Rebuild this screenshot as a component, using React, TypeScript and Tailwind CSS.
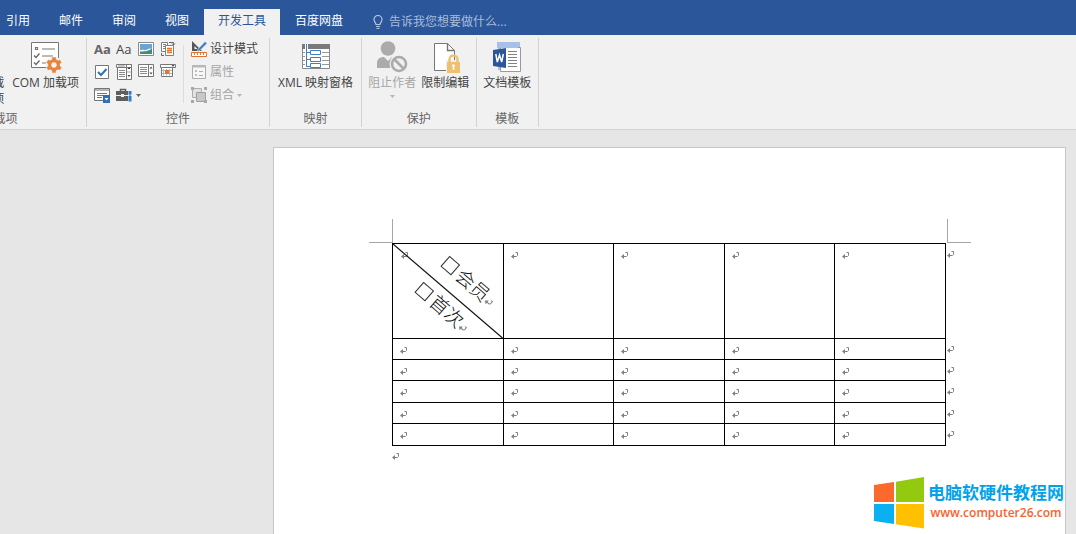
import React from "react";

const tabs = ["引用", "邮件", "审阅", "视图", "开发工具", "百度网盘"];

const bodyRows = [
  { id: 1, height: "h-[21px]" },
  { id: 2, height: "h-[21px]" },
  { id: 3, height: "h-[22px]" },
  { id: 4, height: "h-[21px]" },
  { id: 5, height: "h-[22px]" }
];

const Svg: React.FC<{ size?: number; children: React.ReactNode }> = ({ size = 16, children }) => (
  <svg width={size} height={size} viewBox={`0 0 ${size} ${size}`} fill="none" aria-hidden="true" className="block shrink-0">
    {children}
  </svg>
);

/* Large ribbon icons, 32px */

const ComAddinsIcon = () => (
  <Svg size={32}>
    <path d="M1.500 1.500h27v25h-27z" fill="#fff" stroke="#767676" />
    <path d="M5.500 6.500h2v2h-2zM12 8h13M12 15h11M12 22h5" stroke="#767676" strokeWidth="1.200" />
    <path d="M4 14.500l2 2 3.500-4M4 21.500l2 2 3.500-4" stroke="#666" strokeWidth="1.300" />
    <circle cx="24" cy="24" r="8.500" fill="#f1f1f1" />
    <circle cx="24" cy="24" r="4.300" stroke="#e8833a" strokeWidth="3.200" />
    <path d="M24 16.300v3M24 28.700v3M17.300 20.200l2.600 1.500M28.100 26.300l2.600 1.500M17.300 27.800l2.600-1.500M28.100 21.700l2.600-1.500" stroke="#e8833a" strokeWidth="3.600" />
  </Svg>
);

const XmlMappingIcon = () => (
  <Svg size={32}>
    <path d="M2.500 3.500h27v24h-27z" fill="#fff" stroke="#8a8a8a" />
    <path d="M2 3h28v5H2z" fill="#7a7a7a" />
    <path d="M22 11.500h7M22 15.500h7M22 19.500h7M22 23.500h7M3 11.500h3M3 15.500h3M3 19.500h3M3 23.500h3" stroke="#999" />
    <path d="M6.500 3v22.500h4M6.500 11.500h4M6.500 18.500h4" stroke="#fff" strokeWidth="3" />
    <path d="M6.500 3v22.500h4M6.500 11.500h4M6.500 18.500h4" stroke="#3e7fc1" />
    <path d="M10.500 9.500h10v4h-10zM10.500 16.500h10v4h-10zM10.500 22.500h10v4h-10z" fill="#fff" stroke="#3e7fc1" />
  </Svg>
);

const BlockAuthorsIcon = () => (
  <Svg size={32}>
    <circle cx="12" cy="7.500" r="7.300" fill="#ababab" />
    <path d="M1 27v-5c0-4 3-6 7-6l4 4 4-4c4 0 7 2 7 6v5z" fill="#ababab" />
    <circle cx="23" cy="23" r="9.500" fill="#f1f1f1" />
    <circle cx="23" cy="23" r="7" stroke="#ababab" strokeWidth="2.600" />
    <path d="M18 18l10 10" stroke="#ababab" strokeWidth="2.600" />
  </Svg>
);

const RestrictEditingIcon = () => (
  <Svg size={32}>
    <path d="M5.500 2.500h13l7 7v20h-20z" fill="#fff" stroke="#767676" />
    <path d="M18.500 2.500v7h7" stroke="#767676" strokeWidth="1.400" />
    <path d="M17 19h15v14H17z" fill="#f1f1f1" />
    <path d="M20.500 22v-3.500a4 4 0 0 1 8 0V22" stroke="#edc170" strokeWidth="2.400" />
    <path d="M18 21h13v11H18z" fill="#edc170" />
    <path d="M24.500 24v5" stroke="#fff" strokeWidth="1.600" />
    <circle cx="24.500" cy="24.500" r="1.300" fill="#fff" />
  </Svg>
);

const DocumentTemplateIcon = () => (
  <Svg size={32}>
    <path d="M7 1h22v28H7z" fill="#a6c0e8" />
    <path d="M9.500 6.500h20v24h-20z" fill="#fff" stroke="#8f9bab" />
    <path d="M6 1h21v6H6z" fill="#a6c0e8" />
    <path d="M17 10.500h9M17 13.500h9M17 16.500h9M17 19.500h9M17 22.500h9M17 25.500h9" stroke="#808080" />
    <path d="M2 9l13-2v20L2 25z" fill="#2b579a" />
    <path d="M4.800 13l1.500 8 2.200-7 2.200 7 1.600-8" stroke="#fff" strokeWidth="1.500" />
  </Svg>
);

/* Small ribbon icons, 16px */

const PictureIcon = () => (
  <Svg>
    <path d="M.5 1.500h15v13H.5z" fill="#fff" stroke="#8a8a8a" />
    <path d="M2 3h12v5c-3-2-5 2-8 1-2-.6-3 0-4 .6z" fill="#6ba3d6" />
    <path d="M2 13v-2.500c3 0 8 0 12-3V13z" fill="#3f8e7c" />
  </Svg>
);

const BuildingBlockIcon = () => (
  <Svg>
    <path d="M1.500 1.500h6v9h-6z" fill="#fff" stroke="#808080" />
    <path d="M3 3.500h3M3 5.500h3M3 7.500h3" stroke="#808080" />
    <path d="M5.500 4.500h8v10h-8z" fill="#fff" stroke="#808080" />
    <path d="M7 7.500h5M7 9.500h5M7 11.500h5" stroke="#e0752e" strokeWidth="1.400" />
    <path d="M9 1.500h4.500V4M12 2.500L13.500 4 15 2.500M1.500 12v2.500H4" stroke="#666" />
  </Svg>
);

const CheckBoxIcon = () => (
  <Svg>
    <path d="M1.500 1.500h13v13h-13z" fill="#fff" stroke="#767676" />
    <path d="M4 8l3 3 5.500-6" stroke="#2f6fb7" strokeWidth="2" />
  </Svg>
);

const ComboBoxIcon = () => (
  <Svg>
    <path d="M.5 .5h15v3H.5zM1.500 3.500h9v12h-9zM10.500 .5h5v15h-5z" fill="#fff" stroke="#767676" />
    <path d="M3 6.500h6M3 8.500h6M3 10.500h6M3 12.500h6M2 2h7" stroke="#8a8a8a" />
    <path d="M11.500 5L13 3l1.500 2zM11.500 11l1.500 2 1.500-2z" fill="#444" />
    <path d="M11 8h4" stroke="#aaa" />
  </Svg>
);

const DropDownListIcon = () => (
  <Svg>
    <path d="M.5 .5h15v12H.5zM10.500 .5v12" fill="#fff" stroke="#767676" />
    <path d="M2 3.500h7M2 5.500h7M2 7.500h7M2 9.500h7" stroke="#8a8a8a" />
    <path d="M11.500 4.500L13 2.500l1.500 2zM11.500 8.500l1.500 2 1.500-2z" fill="#444" />
  </Svg>
);

const DatePickerIcon = () => (
  <Svg>
    <path d="M1.500 3.500h11v9h-11z" fill="#fff" stroke="#767676" />
    <path d="M3.500 5v6.500M6.500 5v6.500M9.500 5v6.500M2 6.500h10M2 9.500h10" stroke="#b5b5b5" />
    <path d="M.5 .5h15v3H.5z" fill="#fff" stroke="#767676" />
    <path d="M5 6h4v4H5z" fill="#e0752e" />
    <path d="M11.500 1h3L13 3z" fill="#555" />
  </Svg>
);

const RepeatingSectionIcon = () => (
  <Svg>
    <path d="M.5 1.500h15v12H.5z" fill="#fff" stroke="#767676" />
    <path d="M1 2h14v2H1z" fill="#b5b5b5" />
    <path d="M3 6.500h10M3 8.500h6M3 10.500h5" stroke="#767676" />
    <path d="M9 8h7v8H9z" fill="#2f6fb7" />
    <path d="M10.500 11l2 2.500 2-2.500z" fill="#fff" />
  </Svg>
);

const LegacyToolsIcon = () => (
  <Svg>
    <path d="M4.500 4V2.500h5V4" stroke="#5e5e5e" strokeWidth="1.500" />
    <path d="M0 4h12v4H0zM0 9h12v5H0z" fill="#5e5e5e" />
    <path d="M5 7h3v3H5z" fill="#f1f1f1" />
    <path d="M12.500 4h3v3.500h-1V9h1v5.500h-3V9h1V7.500h-1z" fill="#2f7fc8" />
  </Svg>
);

const DesignModeIcon = () => (
  <Svg>
    <path d="M1 0v10h10z" fill="#555" />
    <path d="M3.500 5v3h3z" fill="#f1f1f1" />
    <path d="M7 8l7-7.500 2 2-7 7-3 1z" fill="#3e7fc1" stroke="#f1f1f1" strokeWidth=".5" />
    <path d="M.5 11.500h15v4H.5z" fill="#fff" stroke="#e0752e" />
    <path d="M3.500 12v2M6.500 12v2M9.500 12v2M12.500 12v2" stroke="#e0752e" />
  </Svg>
);

const PropertiesIcon = () => (
  <Svg>
    <path d="M1.500 1.500h13v13h-13z" fill="#f7f7f7" stroke="#adadad" />
    <path d="M1 1h14v2.500H1z" fill="#b8b8b8" />
    <path d="M4.500 6.500h1v1h-1zM4.500 10.500h1v1h-1z" stroke="#adadad" />
    <path d="M8 7.500h4M8 11.500h4" stroke="#adadad" />
  </Svg>
);

const GroupIcon = () => (
  <Svg>
    <path d="M1.500 1.500h9v9h-9z" fill="#e2e2e2" stroke="#adadad" />
    <path d="M5.500 5.500h9v9h-9z" fill="#c8c8c8" stroke="#a0a0a0" />
    <path d="M0 0h3v3H0zM13 0h3v3h-3zM0 13h3v3H0zM13 13h3v3h-3z" fill="#a8a8a8" />
  </Svg>
);

const Caret: React.FC<{ className: string }> = ({ className }) => (
  <svg width="5" height="3" viewBox="0 0 5 3" aria-hidden="true" className={`block shrink-0 ${className}`}>
    <path d="M0 0h5L2.500 3z" fill="currentColor" />
  </svg>
);

const ReturnMark: React.FC<{ className?: string }> = ({ className = "" }) => (
  <svg width="8" height="8" viewBox="0 0 8 8" fill="none" aria-hidden="true" className={`block shrink-0 text-[#808080] ${className}`}>
    <path d="M4.500 .5h2v3l-1 1H1" stroke="currentColor" />
    <path d="M0 4.500L3 2v5z" fill="currentColor" />
  </svg>
);

const RibbonGroup: React.FC<{ title: string; className?: string; children: React.ReactNode }> = ({ title, className = "", children }) => (
  <section aria-label={title} className={`flex h-[89px] shrink-0 flex-col border-r border-[#d2d2d2] pt-[3px] ${className}`}>
    <div className="flex flex-1 items-start justify-center">{children}</div>
    <div className="text-center leading-4 text-[#666]">{title}</div>
  </section>
);

const LargeButton: React.FC<{ label: string; icon: React.ReactNode; disabled?: boolean; menu?: boolean }> = ({ label, icon, disabled, menu }) => (
  <button disabled={disabled} className="flex shrink-0 flex-col items-center whitespace-nowrap leading-4 text-[#444] disabled:text-[#a6a6a6]">
    {icon}
    <span className="mt-0.5">{label}</span>
    {menu && <Caret className="mt-1 text-[#b5b5b5]" />}
  </button>
);

const controls = [
  { name: "格式文本内容控件", icon: <span className="font-bold text-[#666]">Aa</span> },
  { name: "纯文本内容控件", icon: <span className="text-[#444]">Aa</span> },
  { name: "图片内容控件", icon: <PictureIcon /> },
  { name: "构建基块库内容控件", icon: <BuildingBlockIcon /> },
  { name: "复选框内容控件", icon: <CheckBoxIcon /> },
  { name: "组合框内容控件", icon: <ComboBoxIcon /> },
  { name: "下拉列表内容控件", icon: <DropDownListIcon /> },
  { name: "日期选取器内容控件", icon: <DatePickerIcon /> },
  { name: "重复分区内容控件", icon: <RepeatingSectionIcon /> },
  { name: "旧式工具", icon: <><LegacyToolsIcon /><Caret className="ml-1 text-[#666]" /></> }
];

const Ribbon = () => (
  <div className="flex overflow-hidden border-b border-[#d2d2d2] bg-[#f1f1f1] pt-[3px] pb-0.5">
    <RibbonGroup title="加载项" className="-ml-[84px] w-[171px] pr-[3px]">
      <div className="flex w-full items-start justify-end gap-2 pr-1">
        <button className="mt-[34px] text-right leading-4 text-[#444]">加载<br />项</button>
        <LargeButton label="COM 加载项" icon={<ComAddinsIcon />} />
      </div>
    </RibbonGroup>

    <RibbonGroup title="控件">
      <div className="grid grid-cols-[repeat(4,16px)] gap-x-1.5 gap-y-[7px] pr-[7px] pl-[7px]">
        {controls.map((control) => (
          <button key={control.name} aria-label={control.name} className="flex h-4 items-center text-[13px] leading-4">
            {control.icon}
          </button>
        ))}
      </div>
      <div className="mt-1 h-[58px] border-l border-[#dcdcdc]" />
      <div className="flex flex-col gap-[7px] pr-[11px] pl-[7px] leading-4">
        <button className="flex items-center gap-[3px] text-[#444]"><DesignModeIcon />设计模式</button>
        <button disabled className="flex items-center gap-[3px] text-[#a6a6a6]"><PropertiesIcon />属性</button>
        <button disabled className="flex items-center gap-[3px] text-[#a6a6a6]"><GroupIcon />组合<Caret className="text-[#b5b5b5]" /></button>
      </div>
    </RibbonGroup>

    <RibbonGroup title="映射" className="px-2">
      <LargeButton label="XML 映射窗格" icon={<XmlMappingIcon />} />
    </RibbonGroup>

    <RibbonGroup title="保护" className="pr-[7px] pl-1.5">
      <div className="flex gap-[5px]">
        <LargeButton label="阻止作者" icon={<BlockAuthorsIcon />} disabled menu />
        <LargeButton label="限制编辑" icon={<RestrictEditingIcon />} />
      </div>
    </RibbonGroup>

    <RibbonGroup title="模板" className="pr-[7px] pl-1.5">
      <LargeButton label="文档模板" icon={<DocumentTemplateIcon />} />
    </RibbonGroup>
  </div>
);

const DiagonalLabel: React.FC<{ id: string; text: string; className: string }> = ({ id, text, className }) => (
  <div className={`absolute flex origin-left rotate-[41deg] items-center text-[#111] ${className}`}>
    <input id={id} type="checkbox" className="mr-1 size-[14px] shrink-0 appearance-none border border-[#333] bg-white" />
    <label htmlFor={id} className="text-[19px] leading-5 font-light whitespace-nowrap">{text}</label>
    <ReturnMark className="mt-1.5" />
  </div>
);

const DocumentTable = () => (
  <table className="w-full table-fixed border-collapse">
    <colgroup>
      <col />
      <col />
      <col />
      <col />
      <col />
      <col className="w-3" />
    </colgroup>
    <tbody>
      <tr className="h-[95px]">
        <td className="relative border border-black p-0 pt-2 pl-2 align-top">
          <svg className="absolute inset-0 size-full" viewBox="0 0 110 94" preserveAspectRatio="none" aria-hidden="true">
            <path d="M0 0l110 94" stroke="#111" strokeWidth="1.200" />
          </svg>
          <ReturnMark />
          <DiagonalLabel id="member" text="会员" className="top-[7px] left-[52px]" />
          <DiagonalLabel id="first-visit" text="首次" className="top-[33px] left-[26px]" />
        </td>
        {[2, 3, 4, 5].map((col) => (
          <td key={col} className="border border-black p-0 pt-2 pl-[7px] align-top"><ReturnMark /></td>
        ))}
        <td className="p-0 pt-[7px] pl-px align-top"><ReturnMark /></td>
      </tr>
      {bodyRows.map((row) => (
        <tr key={row.id} className={row.height}>
          {[1, 2, 3, 4, 5].map((col) => (
            <td key={col} className="border border-black p-0 pt-2 pl-[7px] align-top"><ReturnMark /></td>
          ))}
          <td className="p-0 pt-[7px] pl-px align-top"><ReturnMark /></td>
        </tr>
      ))}
    </tbody>
  </table>
);

const Watermark = () => (
  <div className="absolute right-3 bottom-[5px] flex items-center gap-1">
    <svg width="50" height="52" viewBox="0 0 50 52" aria-hidden="true" className="block shrink-0">
      <path d="M0 8l20-3v20H0z" fill="#fb6a2c" />
      <path d="M22 4.700L50 0v25H22z" fill="#93c90e" />
      <path d="M0 27h20v20L0 44z" fill="#0bb0f0" />
      <path d="M22 27h28v24.500l-28-4.200z" fill="#ffc000" />
    </svg>
    <div className="flex flex-col items-center whitespace-nowrap">
      <span className="text-[17px] leading-5 font-bold text-[#00a2ec]">电脑软硬件教程网</span>
      <a href="#" className="text-xs leading-5 font-semibold text-[#f9622f]">www.computer26.com</a>
    </div>
  </div>
);

export default function App() {
  return (
    <div className="relative flex min-h-screen flex-col overflow-hidden bg-[#e6e6e6] font-['Open_Sans','Noto_Sans_CJK_SC',sans-serif] text-xs">
      {/* Tab strip */}
      <header className="flex h-[35px] items-end bg-[#2b579a] text-white">
        <nav className="-ml-2 flex shrink-0 gap-px">
          {tabs.map((tab) => (
            <button
              key={tab}
              className={`h-[26px] px-[14px] pb-0.5 ${tab === "开发工具" ? "bg-[#f1f1f1] text-[#2b579a]" : ""}`}
            >
              {tab}
            </button>
          ))}
        </nav>
        <label className="ml-4 flex h-[26px] flex-1 items-center gap-1.5">
          <svg width="10" height="14" viewBox="0 0 10 14" fill="none" aria-hidden="true" className="shrink-0">
            <path d="M3 9.500C3 7.500 1 7 1 4.500a4 4 0 0 1 8 0C9 7 7 7.500 7 9.500zM3 11.500h4M3.500 13.500h3" stroke="#b6c6e0" strokeWidth="1.200" />
          </svg>
          <input
            type="text"
            aria-label="告诉我您想要做什么"
            placeholder="告诉我您想要做什么..."
            className="w-40 bg-transparent outline-none placeholder:text-[#a9bcdb]"
          />
        </label>
      </header>

      <Ribbon />

      {/* Document area */}
      <main className="flex flex-1 pt-[17px] pr-[10px] pl-[273px]">
        <div className="flex-1 border border-b-0 border-[#c6c6c6] bg-white pt-[71px] pr-[94px] pl-[95px]">
          <div className="flex justify-between">
            <div className="size-6 border-r border-b border-[#a6a6a6]" />
            <div className="size-6 border-b border-l border-[#a6a6a6]" />
          </div>
          <div className="mr-[14px] ml-[23px]">
            <DocumentTable />
            <ReturnMark className="mt-[7px]" />
          </div>
        </div>
      </main>

      <Watermark />
    </div>
  );
}
